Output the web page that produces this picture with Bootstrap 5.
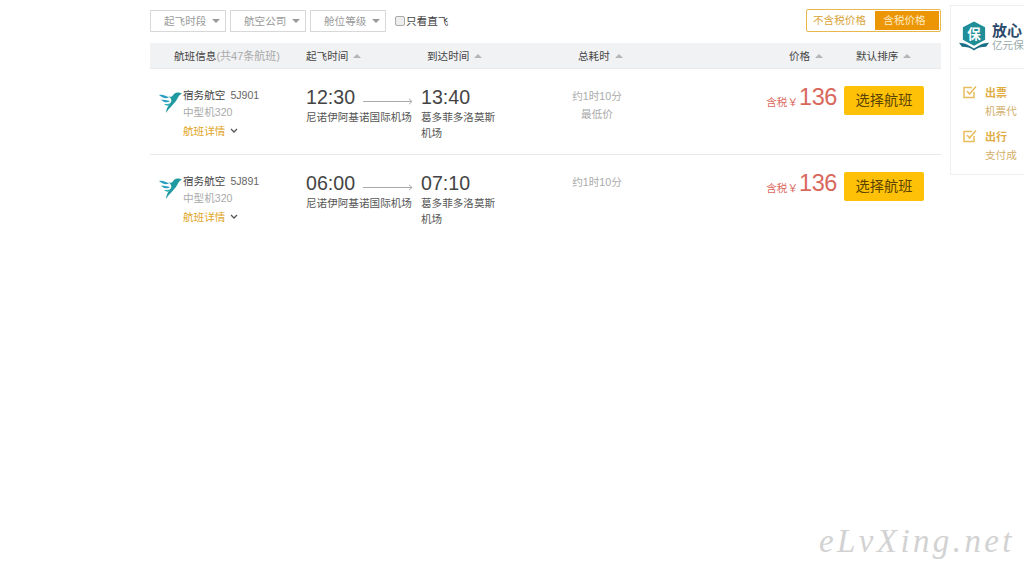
<!DOCTYPE html>
<html lang="zh-CN">
<head>
<meta charset="utf-8">
<title>航班列表</title>
<link href="https://cdn.jsdelivr.net/npm/bootstrap@5.3.0/dist/css/bootstrap.min.css" rel="stylesheet">
<style>
html,body{height:576px;overflow:hidden;background:#fff}
body{font-family:"Liberation Sans","Noto Sans CJK SC",sans-serif;font-size:10.6px;color:#444;position:relative;line-height:1.2}
.page-wrap{width:1024px;padding:5px 0 0 150px;gap:9px}
.main-col{width:791px;flex:none}
.filter-bar{height:38px;padding-top:5px}
.filter-btn{width:76px;height:22px;border:1px solid #d8d8d8;color:#9a9a9a;gap:6px;margin-right:4px;background:#fff;padding-left:13px}
.caret-down{width:0;height:0;border-left:4px solid transparent;border-right:4px solid transparent;border-top:4px solid #999}
.caret-up{display:inline-block;width:0;height:0;border-left:4px solid transparent;border-right:4px solid transparent;border-bottom:4px solid #b5b5b5;margin-left:5px;vertical-align:2px}
.direct-box{width:10px;height:10px;border:1px solid #aaa;border-radius:2px;background:#eee;margin-right:1px}
.direct-lab{color:#444;margin-left:5px;height:22px}
.tax-switch{width:135px;height:23px;border:1px solid #e8b74e;border-radius:2px;padding:1px;background:#fff;margin-top:-1px}
.tax-off{width:67px;color:#d9a53a;padding-right:4px}
.tax-on{flex:1;background:#ec9606;color:#fde9c0;padding-right:5px}
.head-row{height:26px;background:#f1f2f4;border-bottom:1px solid #e9e9e9;color:#444;padding-top:2px}
.c-info{width:156px;flex:none}
.c-dep{width:115px;flex:none}
.c-arr{width:100px;flex:none}
.c-dur{width:100px;flex:none}
.c-price{flex:1}
.head-info{padding-left:24px}
.head-arr{padding-left:6px}
.head-note{color:#aaa;font-size:11px}
.head-dur{padding-left:57px;white-space:nowrap}
.head-price{margin-left:168px;width:67px;white-space:nowrap}
.head-sort{white-space:nowrap}
.flight-row{height:86px;padding-top:17px;border-bottom:1px solid #e8e8e8}
.flight-row.last-row{border-bottom:0}
.air-logo{width:25px;height:24px;flex:none;margin:4px 0 0 8px}
.air-name{color:#444;height:18px;padding-top:3px}
.air-no{color:#666;margin-left:5px}
.air-type{color:#aaa;height:18px;padding-top:2px}
.air-more{color:#e0a526;padding-top:3px}
.chev{width:8px;height:6px;margin-left:5px;vertical-align:1px}
.time-big{font-size:19.6px;line-height:22px;color:#444;height:23px}
.arrow-line{width:50px;height:7px;margin-left:8px;margin-top:12px;flex:none}
.place{color:#555;line-height:16px}
.place-arr{width:80px}
.dur-col{color:#aaa;text-align:center;width:52px;margin-left:50px;padding-top:1px}
.dur-text{line-height:18px}
.price-col{gap:7px;padding-right:17px}
.price-pre{color:#db6a5f;margin-top:10px}
.price-num{font-size:23.5px;letter-spacing:-.4px;line-height:24px;color:#d9685c;margin-top:-1px;margin-left:1px}
.pick-btn{width:80px;height:29px;background:#ffc107;border-radius:2px;color:#5a4300;font-size:14.2px}
.side-box{width:74px;height:170px;border:1px solid #eee;border-right:0;padding:14px 0 0 8px;flex:none;overflow:hidden}
.side-top{height:49px;border-bottom:1px solid #eee;gap:3px}
.side-title{font-size:15px;font-weight:bold;color:#2c4a6a;line-height:16px;padding-top:3px}
.side-sub{color:#9aa;line-height:13px;white-space:nowrap}
.side-item{padding:6px 0 0 4px;gap:8px;height:44px}
.side-item-first{margin-top:10px}
.side-em{color:#e0ad45;font-weight:bold;font-size:11px;line-height:16px;white-space:nowrap}
.side-desc{color:#d3b06c;line-height:20px;white-space:nowrap}
.water{position:absolute;left:819px;top:522px;font-family:"Liberation Serif","Noto Sans CJK SC",serif;font-style:italic;font-size:33px;color:#d2d2d2;letter-spacing:3.4px;white-space:nowrap}
</style>
</head>
<body>
<svg width="0" height="0" class="position-absolute">
  <defs>
    <symbol id="air5j" viewBox="0 0 25 24">
      <path d="M1 5 C5 4 8 6 11 7.500 C8 9 4 8 1 5Z" fill="#2b9fc0"/>
      <path d="M3 9.500 C6 9.500 9 10.500 12 11 C10 13 6 13 3 9.500Z" fill="#2b9fc0"/>
      <path d="M6 14 C8 14 10 14 12 13.500 C11 16 9 16.500 6 14Z" fill="#2fb1b5"/>
      <path d="M10 6 C12 7.500 14 7 16 4 C18 2 21 2 24 3.500 C21 4.500 20 8 18 11 C15 15 11 18 8 23 C8 19 10 16 13 12 C14 10 13 8 10 6Z" fill="#1f9aa0"/>
    </symbol>
    <symbol id="chk" viewBox="0 0 14 14">
      <path d="M11 7v5.500H1V2.500H9" fill="none" stroke="#e8bc5c" stroke-width="1.500"/>
      <path d="M4 6l2.500 3L13 1.500" fill="none" stroke="#e8bc5c" stroke-width="1.500"/>
    </symbol>
    <symbol id="arr" viewBox="0 0 50 7">
      <path d="M0 3.500H49M46 .8l3 2.700-3 2.700" fill="none" stroke="#aaa" stroke-width="1"/>
    </symbol>
    <symbol id="chv" viewBox="0 0 8 6">
      <path d="M1 1l3 3 3-3" fill="none" stroke="#555" stroke-width="1.300"/>
    </symbol>
  </defs>
</svg>

<div class="page-wrap d-flex align-items-start">
  <div class="main-col">
    <div class="filter-bar d-flex align-items-start">
      <div class="filter-btn d-flex align-items-center">起飞时段<span class="caret-down"></span></div>
      <div class="filter-btn d-flex align-items-center">航空公司<span class="caret-down"></span></div>
      <div class="filter-btn d-flex align-items-center">舱位等级<span class="caret-down"></span></div>
      <div class="d-flex align-items-center direct-lab"><span class="direct-box"></span>只看直飞</div>
      <div class="tax-switch d-flex ms-auto text-center">
        <div class="tax-off d-flex align-items-center justify-content-center">不含税价格</div>
        <div class="tax-on d-flex align-items-center justify-content-center">含税价格</div>
      </div>
    </div>

    <div class="head-row d-flex align-items-center">
      <div class="c-info head-info"><span>航班信息</span><span class="head-note">(共47条航班)</span></div>
      <div class="c-dep"><span>起飞时间</span><i class="caret-up"></i></div>
      <div class="c-arr head-arr"><span>到达时间</span><i class="caret-up"></i></div>
      <div class="c-dur"><div class="head-dur">总耗时<i class="caret-up"></i></div></div>
      <div class="c-price d-flex">
        <span class="head-price">价格<i class="caret-up"></i></span>
        <span class="head-sort">默认排序<i class="caret-up"></i></span>
      </div>
    </div>

    <div class="flight-row d-flex">
      <div class="c-info d-flex">
        <svg class="air-logo"><use href="#air5j"/></svg>
        <div>
          <div class="air-name">宿务航空<span class="air-no">5J901</span></div>
          <div class="air-type">中型机320</div>
          <div class="air-more">航班详情<svg class="chev"><use href="#chv"/></svg></div>
        </div>
      </div>
      <div class="c-dep d-flex flex-column">
        <div class="d-flex"><span class="time-big">12:30</span><svg class="arrow-line"><use href="#arr"/></svg></div>
        <div class="place text-nowrap">尼诺伊阿基诺国际机场</div>
      </div>
      <div class="c-arr">
        <div class="time-big">13:40</div>
        <div class="place place-arr">葛多菲多洛莫斯机场</div>
      </div>
      <div class="c-dur"><div class="dur-col"><div class="dur-text">约1时10分</div><div class="dur-text">最低价</div></div></div>
      <div class="c-price d-flex justify-content-end price-col">
        <div class="d-flex align-items-start"><span class="price-pre">含税￥</span><span class="price-num">136</span></div>
        <div class="pick-btn d-flex align-items-center justify-content-center">选择航班</div>
      </div>
    </div>

    <div class="flight-row last-row d-flex">
      <div class="c-info d-flex">
        <svg class="air-logo"><use href="#air5j"/></svg>
        <div>
          <div class="air-name">宿务航空<span class="air-no">5J891</span></div>
          <div class="air-type">中型机320</div>
          <div class="air-more">航班详情<svg class="chev"><use href="#chv"/></svg></div>
        </div>
      </div>
      <div class="c-dep d-flex flex-column">
        <div class="d-flex"><span class="time-big">06:00</span><svg class="arrow-line"><use href="#arr"/></svg></div>
        <div class="place text-nowrap">尼诺伊阿基诺国际机场</div>
      </div>
      <div class="c-arr">
        <div class="time-big">07:10</div>
        <div class="place place-arr">葛多菲多洛莫斯机场</div>
      </div>
      <div class="c-dur"><div class="dur-col"><div class="dur-text">约1时10分</div></div></div>
      <div class="c-price d-flex justify-content-end price-col">
        <div class="d-flex align-items-start"><span class="price-pre">含税￥</span><span class="price-num">136</span></div>
        <div class="pick-btn d-flex align-items-center justify-content-center">选择航班</div>
      </div>
    </div>
  </div>

  <aside class="side-box">
    <div class="side-top d-flex">
      <svg width="30" height="31" viewBox="0 0 31 31" class="flex-none">
        <path d="M15.500 1 L27 7 V20 L15.500 26 L4 20 V7Z" fill="#1f8e99"/>
        <text x="15.500" y="19" font-size="14" font-weight="bold" text-anchor="middle" fill="#fff" font-family="Noto Sans CJK SC">保</text>
        <path d="M0 23 C6 23 11 26 15.500 29 C20 26 25 23 31 23 L28 27 C23 27 19 28 15.500 31 C12 28 8 27 3 27Z" fill="#1c6f86"/>
      </svg>
      <div><div class="side-title">放心</div><div class="side-sub">亿元保</div></div>
    </div>
    <div class="side-item side-item-first d-flex">
      <svg width="14" height="14" class="flex-none"><use href="#chk"/></svg>
      <div><div class="side-em">出票</div><div class="side-desc">机票代</div></div>
    </div>
    <div class="side-item d-flex">
      <svg width="14" height="14" class="flex-none"><use href="#chk"/></svg>
      <div><div class="side-em">出行</div><div class="side-desc">支付成</div></div>
    </div>
  </aside>
</div>

<div class="water">eLvXing.net</div>
</body>
</html>
